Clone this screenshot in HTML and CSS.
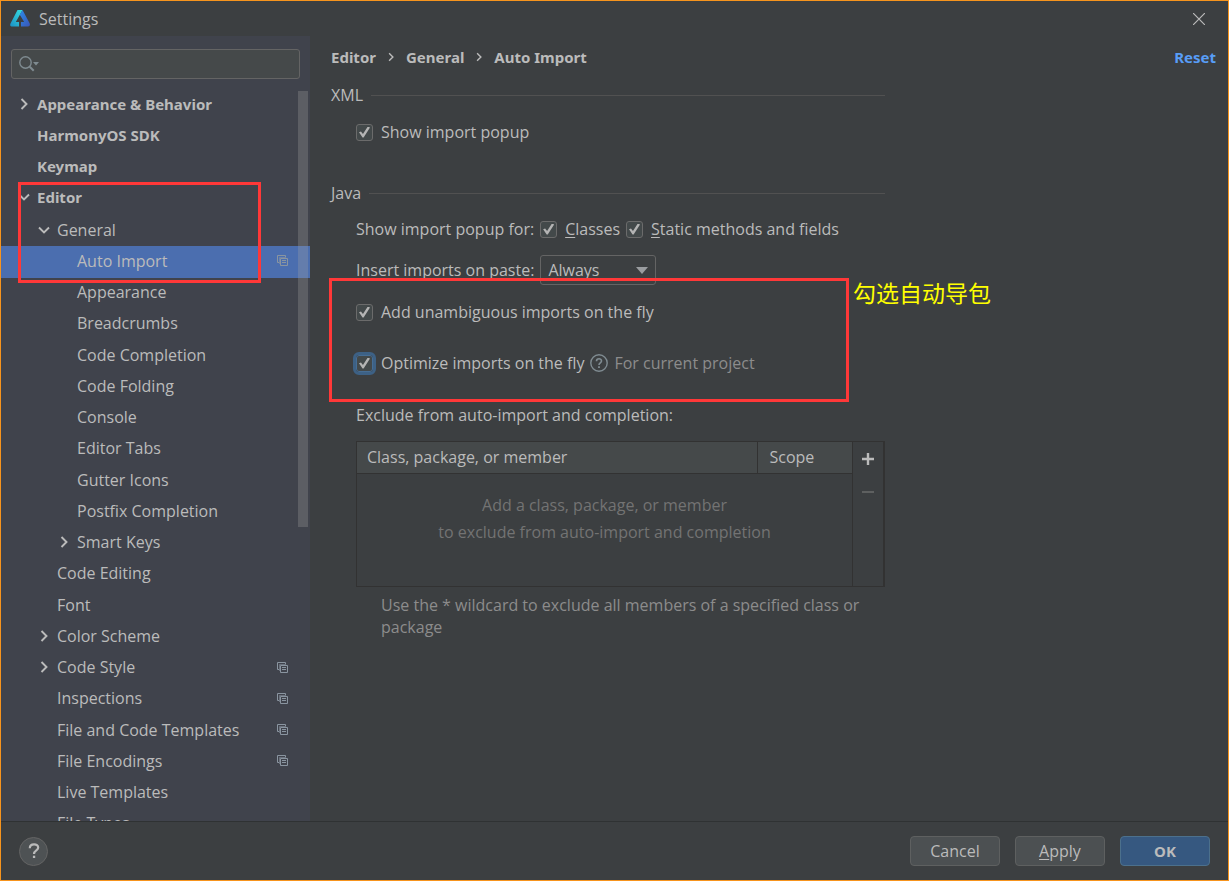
FILE: index.html
```html
<!DOCTYPE html>
<html lang="en">
<head>
<meta charset="utf-8">
<title>Settings</title>
<link rel="stylesheet" href="styles.css">
</head>
<body>
<svg class="defs" aria-hidden="true">
  <symbol id="right" viewBox="0 0 16 16"><path d="M5.500 3l5 5-5 5" fill="none" stroke="currentColor" stroke-width="1.900"/></symbol>
  <symbol id="down" viewBox="0 0 16 16"><path d="M3 5.500l5 5 5-5" fill="none" stroke="currentColor" stroke-width="1.900"/></symbol>
  <symbol id="copy" viewBox="0 0 11 11"><path d="M2 7.500H.5v-7h8V2" fill="none" stroke="currentColor"/><path d="M2.500 9V2.500H9" fill="none" stroke="currentColor" opacity=".6"/><path d="M3.500 3.500h7v7h-7zM5 5.500h4M5 7.500h4" fill="none" stroke="currentColor"/></symbol>
</svg>
<div class="window">
  <header class="titlebar">
    <svg class="logo" viewBox="0 0 20 17" aria-hidden="true">
      <defs>
        <linearGradient id="teal" x1="0" y1="1" x2="1" y2="0"><stop offset="0" stop-color="#1c8fc4"/><stop offset="1" stop-color="#35dfe0"/></linearGradient>
        <linearGradient id="blue" x1="0" y1="0" x2="1" y2="1"><stop offset="0" stop-color="#2c8be8"/><stop offset="1" stop-color="#3a56b8"/></linearGradient>
      </defs>
      <path d="M7.500 0h5L5.800 12H9v4.500H1.500C.3 16.500-.2 15 .5 13.500z" fill="url(#teal)"/>
      <path d="M12.500 0l7 13c.9 1.700.2 3.500-1.500 3.500H11V12h3.200L9.800 4.800z" fill="url(#blue)"/>
    </svg>
    <h1 class="title">Settings</h1>
    <button class="close" aria-label="Close"><svg viewBox="0 0 12 12"><path d="M0 0l12 12M12 0L0 12" stroke="currentColor" stroke-width="1.200"/></svg></button>
  </header>
  <div class="body">
    <nav class="sidebar" aria-label="Settings categories">
      <div class="search">
        <svg viewBox="0 0 22 16" aria-hidden="true"><circle cx="6.500" cy="6.500" r="5.700" fill="none" stroke="currentColor" stroke-width="1.400"/><path d="M10.700 10.700l4 4" stroke="currentColor" stroke-width="2"/><path d="M14 6h6l-3 3.500z" fill="currentColor"/></svg>
        <input type="text" aria-label="Search settings">
      </div>
      <div class="viewport">
        <ul class="tree">
          <li class="row l1"><svg class="arrow"><use href="#right"/></svg><span>Appearance &amp; Behavior</span></li>
          <li class="row l1"><i class="arrow"></i><span>HarmonyOS SDK</span></li>
          <li class="row l1"><i class="arrow"></i><span>Keymap</span></li>
          <li class="row l1"><svg class="arrow"><use href="#down"/></svg><span>Editor</span></li>
          <li class="row l2"><svg class="arrow"><use href="#down"/></svg><span>General</span></li>
          <li class="row l3 selected"><i class="arrow"></i><span>Auto Import</span><svg class="copy"><use href="#copy"/></svg></li>
          <li class="row l3"><i class="arrow"></i><span>Appearance</span></li>
          <li class="row l3"><i class="arrow"></i><span>Breadcrumbs</span></li>
          <li class="row l3"><i class="arrow"></i><span>Code Completion</span></li>
          <li class="row l3"><i class="arrow"></i><span>Code Folding</span></li>
          <li class="row l3"><i class="arrow"></i><span>Console</span></li>
          <li class="row l3"><i class="arrow"></i><span>Editor Tabs</span></li>
          <li class="row l3"><i class="arrow"></i><span>Gutter Icons</span></li>
          <li class="row l3"><i class="arrow"></i><span>Postfix Completion</span></li>
          <li class="row l3"><svg class="arrow"><use href="#right"/></svg><span>Smart Keys</span></li>
          <li class="row l2"><i class="arrow"></i><span>Code Editing</span></li>
          <li class="row l2"><i class="arrow"></i><span>Font</span></li>
          <li class="row l2"><svg class="arrow"><use href="#right"/></svg><span>Color Scheme</span></li>
          <li class="row l2"><svg class="arrow"><use href="#right"/></svg><span>Code Style</span><svg class="copy"><use href="#copy"/></svg></li>
          <li class="row l2"><i class="arrow"></i><span>Inspections</span><svg class="copy"><use href="#copy"/></svg></li>
          <li class="row l2"><i class="arrow"></i><span>File and Code Templates</span><svg class="copy"><use href="#copy"/></svg></li>
          <li class="row l2"><i class="arrow"></i><span>File Encodings</span><svg class="copy"><use href="#copy"/></svg></li>
          <li class="row l2"><i class="arrow"></i><span>Live Templates</span></li>
          <li class="row l2"><i class="arrow"></i><span>File Types</span></li>
        </ul>
        <div class="thumb"></div>
      </div>
    </nav>
    <main class="page">
      <div class="crumbs">
        <span>Editor</span><svg><use href="#right"/></svg><span>General</span><svg><use href="#right"/></svg><span>Auto Import</span>
        <a class="reset" href="#">Reset</a>
      </div>
      <form class="form">
        <h2 class="section">XML</h2>
        <div class="line xml"><label class="check"><input type="checkbox" checked>Show import popup</label></div>
        <h2 class="section">Java</h2>
        <div class="line popup">
          <span>Show import popup for:</span>
          <label class="check"><input type="checkbox" checked><span><u>C</u>lasses</span></label>
          <label class="check"><input type="checkbox" checked><span><u>S</u>tatic methods and fields</span></label>
        </div>
        <div class="line paste">
          <label for="paste"><u>I</u>nsert imports on paste:</label>
          <span class="select"><select id="paste"><option>Always</option></select><svg viewBox="0 0 12 7"><path d="M0 0h12L6 7z" fill="currentColor"/></svg></span>
        </div>
        <div class="line add"><label class="check"><input type="checkbox" checked>Add unambiguous imports on the fly</label></div>
        <div class="line optimize">
          <label class="check"><input class="focused" type="checkbox" checked>Optimize imports on the fly</label>
          <svg class="hint-icon" viewBox="0 0 18 18"><circle cx="9" cy="9" r="8.200" fill="none" stroke="currentColor" stroke-width="1.400"/><path d="M6.500 7.200C6.500 3.800 11.600 4 11.500 7c0 1.800-2.500 1.900-2.500 4" fill="none" stroke="currentColor" stroke-width="1.600"/><path d="M8.100 12.200h1.800V14H8.100z" fill="currentColor"/></svg>
          <span class="muted">For current project</span>
        </div>
        <div class="line exclude" id="exclude">Exclude from auto-import and completion:</div>
        <div class="list">
          <table aria-labelledby="exclude">
            <thead><tr><th>Class, package, or member</th><th class="scope">Scope</th></tr></thead>
            <tbody><tr><td colspan="2">Add a class, package, or member<br>to exclude from auto-import and completion</td></tr></tbody>
          </table>
          <div class="tools">
            <button type="button" aria-label="Add"><svg viewBox="0 0 12 12"><path d="M6 0v12M0 6h12" stroke="currentColor" stroke-width="2.400"/></svg></button>
            <button type="button" aria-label="Remove" disabled><svg viewBox="0 0 12 12"><path d="M0 6h12" stroke="currentColor" stroke-width="2"/></svg></button>
          </div>
        </div>
        <p class="note">Use the * wildcard to exclude all members of a specified class or package</p>
      </form>
    </main>
  </div>
  <footer class="footer">
    <button class="help" aria-label="Help"><svg viewBox="0 0 12 16"><path d="M1.800 5.200C1.800 0 10.400.2 10.200 4.800 10.100 7.500 6 7.300 6 11" fill="none" stroke="currentColor" stroke-width="2.200"/><path d="M4.900 12.700h2.300V15H4.900z" fill="currentColor"/></svg></button>
    <button class="btn">Cancel</button>
    <button class="btn"><u>A</u>pply</button>
    <button class="btn primary">OK</button>
  </footer>
  <div class="mark mark-tree"></div>
  <div class="mark mark-options"></div>
  <div class="callout" lang="zh">勾选自动导包</div>
</div>
</body>
</html>
```
FILE: styles.css
```css
* { box-sizing: border-box; }
body { margin: 0; background: #3c3f41; }
.defs { position: absolute; width: 0; height: 0; }

.window {
  position: relative;
  display: flex;
  flex-direction: column;
  height: 100vh;
  border: 1px solid #f7941d;
  background: #3c3f41;
  color: #bbbbbb;
  font: 16px/22px "Open Sans", "Noto Sans", sans-serif;
}
button, input, select { font: inherit; color: inherit; margin: 0; }
u { text-underline-offset: 2px; }

.titlebar { display: flex; align-items: center; height: 35px; padding: 0 23px 0 9px; }
.logo { width: 20px; height: 17px; }
.title { flex: 1; margin: 0 0 0 9px; font-size: 16px; font-weight: 400; }
.close { display: flex; padding: 0; border: 0; background: none; }
.close svg { width: 12px; height: 12px; }

.body { display: flex; flex: 1; min-height: 0; }
.sidebar { display: flex; flex-direction: column; width: 309px; background: #40434c; }
.search {
  display: flex;
  align-items: center;
  height: 30px;
  margin: 13px 10px 11px;
  padding: 0 7px;
  border: 1px solid #646464;
  border-radius: 3px;
  background: #45494a;
}
.search svg { width: 22px; height: 16px; color: #7f8b91; }
.search input { flex: 1; min-width: 0; border: 0; outline: 0; background: none; }

.viewport { position: relative; flex: 1; min-height: 0; overflow: hidden; }
.tree {
  display: grid;
  grid-template-rows: repeat(24, 1fr);
  min-height: 750px;
  margin: 0;
  padding: 0;
  list-style: none;
}
.row { display: flex; align-items: center; padding-right: 22px; padding-bottom: 2px; }
.row span { flex: 1; white-space: nowrap; }
.l1 { padding-left: 15px; padding-bottom: 4px; }
.l1, .crumbs, .primary { font-family: "Noto Sans", sans-serif; font-size: 15px; font-weight: 700; }
.l2 { padding-left: 35px; }
.l3 { padding-left: 55px; }
.selected { background: #4b6eaf; }
.arrow { flex: none; width: 16px; height: 16px; margin-right: 5px; }
.copy { width: 11px; height: 11px; color: #8a95a0; }
.thumb { position: absolute; top: 1px; right: 2px; width: 10px; height: 436px; background: rgba(166, 166, 166, 0.28); }

.page { flex: 1; min-width: 0; padding: 10px 12px 0 21px; }
.crumbs { display: flex; align-items: center; }
.crumbs svg { width: 12px; height: 12px; margin: 0 9px; }
.reset { margin-left: auto; color: #589df6; text-decoration: none; }

.form { max-width: 554px; }
.section { display: flex; align-items: center; gap: 8px; margin: 16px 0 0; font-size: 16px; font-weight: 400; }
.section::after { content: ""; flex: 1; height: 1px; background: #515151; }
.line { display: flex; align-items: center; gap: 6px; margin-left: 25px; }
.xml { margin: 15px 0 39px 25px; }
.popup { margin-top: 14px; }
.paste { margin-top: 15px; }
.add { margin-top: 16px; }
.optimize { margin-top: 29px; }
.exclude { margin-top: 30px; }
.check { display: flex; align-items: center; gap: 8px; }
.check input {
  display: grid;
  place-items: center;
  flex: none;
  width: 17px;
  height: 17px;
  appearance: none;
  border: 1px solid #6b6b6b;
  border-radius: 3px;
  background: #43494a;
}
.check input:checked::before {
  content: "";
  width: 11px;
  height: 11px;
  background: #b4b4b4;
  clip-path: polygon(0 52%, 18% 45%, 36% 68%, 80% 0, 100% 10%, 42% 100%, 32% 100%);
}
.check .focused { outline: 3px solid #3d6185; border-color: #466d94; }
.select { position: relative; }
.select select {
  display: block;
  width: 116px;
  height: 30px;
  padding: 0 7px;
  appearance: none;
  border: 1px solid #646464;
  border-radius: 3px;
  background: #3c3f41;
}
.select svg { position: absolute; top: 12px; right: 8px; width: 12px; height: 7px; color: #9a9da0; pointer-events: none; }
.hint-icon { width: 18px; height: 18px; color: #7f8b91; }
.muted { color: #8c8c8c; }

.list { display: flex; height: 146px; margin: 15px 0 0 25px; border: 1px solid #323232; border-right-width: 2px; }
.list table { flex: 1; border-collapse: collapse; }
.list th { height: 31px; padding: 0 10px; border-bottom: 1px solid #323232; background: #45494a; font-weight: 400; text-align: left; }
.list .scope { width: 95px; padding-left: 12px; border-left: 1px solid #323232; }
.list td { padding: 18px 0 0; color: #737373; line-height: 27px; text-align: center; vertical-align: top; }
.tools { display: flex; flex-direction: column; width: 31px; border-left: 1px solid #323232; }
.tools button { display: grid; place-items: center; height: 33px; padding: 0; border: 0; background: none; }
.tools button:disabled { color: #5e6060; }
.tools svg { width: 12px; height: 12px; }
.note { margin: 7px 0 0 50px; color: #8c8c8c; }

.footer { display: flex; align-items: center; gap: 15px; height: 59px; padding: 0 18px; border-top: 1px solid #2f3233; }
.help {
  display: grid;
  place-items: center;
  width: 29px;
  height: 29px;
  margin-right: auto;
  padding: 0;
  border: 1px solid #646464;
  border-radius: 50%;
  background: #4e5254;
}
.help svg { width: 12px; height: 16px; }
.btn { width: 90px; height: 30px; padding: 0; border: 1px solid #5e6060; border-radius: 4px; background: #4c5052; }
.primary { border-color: #4c708c; background: #365880; }

.mark { position: absolute; border: 3px solid #ff3838; pointer-events: none; }
.mark-tree { left: 17px; top: 181px; width: 243px; height: 101px; }
.mark-options { left: 328px; top: 277px; width: 520px; height: 124px; }
.callout { position: absolute; left: 852px; top: 275px; color: #ffff00; font: 23px/32px "Noto Sans CJK SC", sans-serif; }
```
